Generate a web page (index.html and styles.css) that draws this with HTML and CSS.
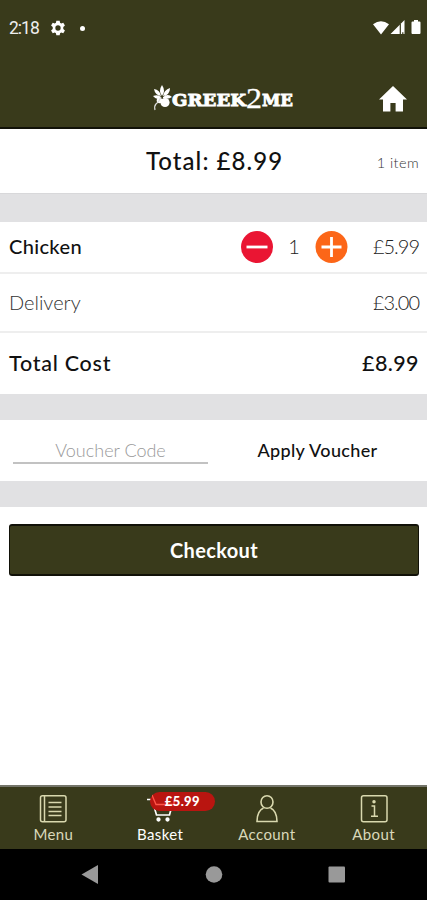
FILE: index.html
```html
<!DOCTYPE html>
<html lang="en">
<head>
<meta charset="utf-8">
<meta name="viewport" content="width=device-width, initial-scale=1">
<title>Greek2Me Basket</title>
<link rel="stylesheet" href="styles.css">
</head>
<body>
<div class="app">
  <header class="header">
    <div class="status">
      <span class="time">2:18</span>
      <svg class="gear" width="16" height="16" viewBox="0 0 24 24"><path fill="#fff" fill-rule="evenodd" d="M9.500 1h5l.6 3.300 1.700 1 3.100-1.200 2.500 4.300-2.500 2.200v2.800l2.500 2.200-2.500 4.300-3.100-1.200-1.700 1-.6 3.300h-5l-.6-3.300-1.700-1-3.100 1.200-2.500-4.300 2.500-2.200v-2.800l-2.500-2.200 2.500-4.300 3.100 1.200 1.700-1zM12 8a4 4 0 1 0 0 8 4 4 0 0 0 0-8z"/></svg>
      <span class="dot"></span>
      <svg class="signals" width="50" height="16" viewBox="0 0 50 16"><path fill="#fff" d="M0 4.200Q8 -1.800 16 4.200L8 14.500zM17.500 14 31.500 0V14zM41 1.500V0h4v1.500h1.500q1 0 1 1V13q0 1-1 1h-7q-1 0-1-1V2.500q0-1 1-1z"/><path stroke="#393a1b" stroke-width="1.200" d="M27.300 4v10M29.800 12.300v1.700"/></svg>
    </div>
    <div class="titlebar">
      <svg class="logo" width="144" height="44" viewBox="0 -6 144 44">
        <g fill="#fff">
          <path d="M10 13Q6 8 10 2Q14 8 10 13zM9 13Q3 12 2 6Q8 7 9 13zM11 13Q12 7 18 5Q18 12 11 13zM8 16Q4 17 1 13Q6 11 9 14zM11 14Q16 10 20 14Q16 17 11 15z"/>
          <circle cx="13" cy="19.500" r="4.600"/><circle cx="7.500" cy="17.500" r="2.800"/>
        </g>
        <path d="M9 14Q7 19 4 21Q2 23 3 27" fill="none" stroke="#ddd" stroke-width="1.200"/>
        <text class="slab" x="20" y="22.500" textLength="74" lengthAdjust="spacingAndGlyphs">GREEK</text>
        <text class="two" x="94" y="24.500" textLength="16" lengthAdjust="spacingAndGlyphs">2</text>
        <text class="slab" x="110" y="22.500" textLength="31" lengthAdjust="spacingAndGlyphs">ME</text>
      </svg>
      <svg class="home" width="30" height="28" viewBox="0 0 30 28"><path fill="#fff" d="M15 1 29 14.500H25V26.500H17.600V18H12.400V26.500H5V14.500H1z"/></svg>
    </div>
  </header>
  <main>
    <section class="summary"><h1>Total: £8.99</h1><span class="count">1 item</span></section>
    <section class="row item">
      <span class="name">Chicken</span>
      <div class="stepper">
        <svg width="32" height="32" viewBox="0 0 32 32"><circle cx="16" cy="16" r="16" fill="#ea1533"/><path stroke="#fff" stroke-width="2.800" d="M5.500 16h21"/></svg>
        <span class="qty">1</span>
        <svg width="33" height="33" viewBox="0 0 33 33"><circle cx="16.500" cy="16" r="16" fill="#fc6618"/><path stroke="#fff" stroke-width="2.800" d="M6.500 16h20M16.500 6v20"/></svg>
      </div>
      <span class="price">£5.99</span>
    </section>
    <section class="row delivery"><span class="label">Delivery</span><span class="price">£3.00</span></section>
    <section class="row total"><span class="label">Total Cost</span><span class="sum">£8.99</span></section>
    <section class="voucher"><div class="field"><span>Voucher Code</span></div><div class="apply"><span>Apply Voucher</span></div></section>
    <section class="actions"><div class="checkout"><span>Checkout</span></div></section>
  </main>
  <nav class="tabs">
    <div class="tab">
      <svg width="28" height="30" viewBox="0 0 28 30" fill="none" stroke="#d9d8ae" stroke-width="1.500"><rect x="1.500" y="1.800" width="25.500" height="26" rx="2"/><path d="M5.500 2v26M9.500 8.500h13M9.500 13h13M9.500 17.500h13M9.500 21.500h13"/></svg>
      <span class="t-menu">Menu</span>
    </div>
    <div class="tab">
      <svg class="cart" width="28" height="30" viewBox="0 0 28 30" fill="none" stroke="#fff" stroke-width="1.700"><path d="M1 5.500h5l4.500 15.500h13l2.500-9.500H8"/><circle cx="12.500" cy="25.500" r="1.300" fill="#fff"/><circle cx="21.500" cy="25.500" r="1.300" fill="#fff"/></svg>
      <span class="badge"><svg width="24" height="19" viewBox="0 0 24 19" fill="none" stroke="#ff5548" stroke-width="1.300"><path d="M0 3 4 12.500H22V9"/></svg><span>£5.99</span></span>
      <span class="t-basket">Basket</span>
    </div>
    <div class="tab">
      <svg width="28" height="30" viewBox="0 0 28 30" fill="none" stroke="#d9d8ae" stroke-width="1.600"><ellipse cx="14" cy="8" rx="6" ry="6.300"/><path d="M10.500 14Q4 17 4 27.500H24Q24 17 17.500 14"/></svg>
      <span class="t-account">Account</span>
    </div>
    <div class="tab">
      <svg width="28" height="30" viewBox="0 0 28 30" fill="none" stroke="#d9d8ae" stroke-width="1.500"><rect x="1.500" y="1.800" width="25.500" height="26" rx="2"/><path d="M11.500 12H14.500V22M11 22.200h7"/><circle cx="14" cy="7.800" r="1" fill="#d9d8ae"/></svg>
      <span class="t-about">About</span>
    </div>
  </nav>
  <div class="system">
    <svg width="427" height="51" viewBox="0 0 427 51" fill="#999"><path d="M81.500 25.500 98 16V35z"/><circle cx="214" cy="25.500" r="8.300"/><rect x="328.500" y="17.500" width="16.500" height="16" rx="1"/></svg>
  </div>
</div>
</body>
</html>
```
FILE: styles.css
```css
* { box-sizing: border-box; }
body { margin: 0; font-family: Lato, "Liberation Sans", sans-serif; color: #111; background: #fff; }
svg { display: block; flex: none; }
h1 { margin: 0; }
.app { width: 427px; height: 900px; display: flex; flex-direction: column; overflow: hidden; }
.header { height: 129px; background: #393a1b; border-bottom: 2px solid #111108; }
.status { height: 56px; display: flex; align-items: center; padding: 0 7px 0 9px; color: #eee; }
.time { font: 17.500px/20px Roboto, sans-serif; letter-spacing: -1px; width: 41px; }
.dot { width: 5px; height: 5px; border-radius: 50%; background: #fff; margin-left: 14px; }
.signals { margin: 0 -3px 0 auto; }
.titlebar { display: flex; align-items: center; height: 70px; padding: 15px 19px 0 152px; justify-content: space-between; }
.slab { font-family: "DejaVu Serif", serif; font-weight: 700; font-size: 17.500px; fill: #fff; stroke: #fff; stroke-width: 0.9px; }
.two { font-family: "Liberation Serif", serif; font-size: 30px; fill: #fff; stroke: #fff; stroke-width: 0.3px; }
main { flex: 1; }
.summary { height: 65px; display: grid; grid-template-columns: 146px 1fr 100px; align-items: center; border-bottom: 1px solid #d8d8da; padding-right: 8px; }
.summary h1 { grid-column: 2; font-size: 24px; font-weight: 500; letter-spacing: 1.050px; white-space: nowrap; line-height: 30px; }
.count { font-size: 14.500px; font-weight: 300; color: #333; letter-spacing: 0.4px; text-align: right; padding-top: 2px; }
.row { display: flex; align-items: center; padding: 0 8px 0 9px; justify-content: space-between; white-space: nowrap; }
.item { height: 80px; border-top: 28px solid #e1e1e3; border-bottom: 2px solid #eee; }
.name { font-size: 20px; font-weight: 500; width: 232px; letter-spacing: 0.35px; padding-bottom: 2px; }
.stepper { display: flex; align-items: center; width: 107px; justify-content: space-between; }
.qty, .price { font-size: 20px; font-weight: 300; color: #222; padding-bottom: 2px; }
.price { flex: 1; text-align: right; letter-spacing: -1px; }
.delivery { height: 59px; border-bottom: 2px solid #eee; }
.delivery .label { font-size: 20px; font-weight: 300; color: #333; padding-bottom: 2px; }
.total { height: 61px; font-size: 21.500px; font-weight: 500; letter-spacing: 0.75px; padding-bottom: 1px; }
.sum { letter-spacing: 0.4px; }
.voucher { height: 113px; border-top: 26px solid #e1e1e3; border-bottom: 26px solid #e1e1e3; display: flex; padding: 0 0 0 13px; }
.field { width: 195px; height: 44px; border-bottom: 2px solid #c2c2c2; text-align: center; font-size: 18px; font-weight: 300; color: #999; line-height: 60px; }
.apply { flex: 1; text-align: center; font-size: 18px; font-weight: 500; line-height: 60px; letter-spacing: 0.35px; }
.actions { padding: 17px 8px 0 9px; }
.checkout { height: 52px; border: 1px solid #111108; border-width: 2px 1px; border-radius: 3px; background: #393a1b; color: #fff; font-size: 20px; font-weight: 700; text-align: center; line-height: 48px; letter-spacing: 0.35px; }
.tabs { height: 64px; background: #393a1b; border-top: 2px solid #74756a; display: flex; color: #d9d8ba; }
.tab { flex: 1; display: flex; flex-direction: column; align-items: center; padding-top: 7px; position: relative; font-size: 15px; line-height: 20px; letter-spacing: 0.4px; white-space: nowrap; }
.t-basket { color: #fff; }
.badge { position: absolute; left: 43px; top: 5px; width: 65px; height: 19px; border-radius: 10px; background: #b91510; color: #fff; font-size: 13px; font-weight: 900; line-height: 18px; }
.badge svg { position: absolute; left: 2px; top: 0; }
.badge span { position: absolute; left: 15px; top: 0; }
.system { height: 51px; background: #000; }
```
